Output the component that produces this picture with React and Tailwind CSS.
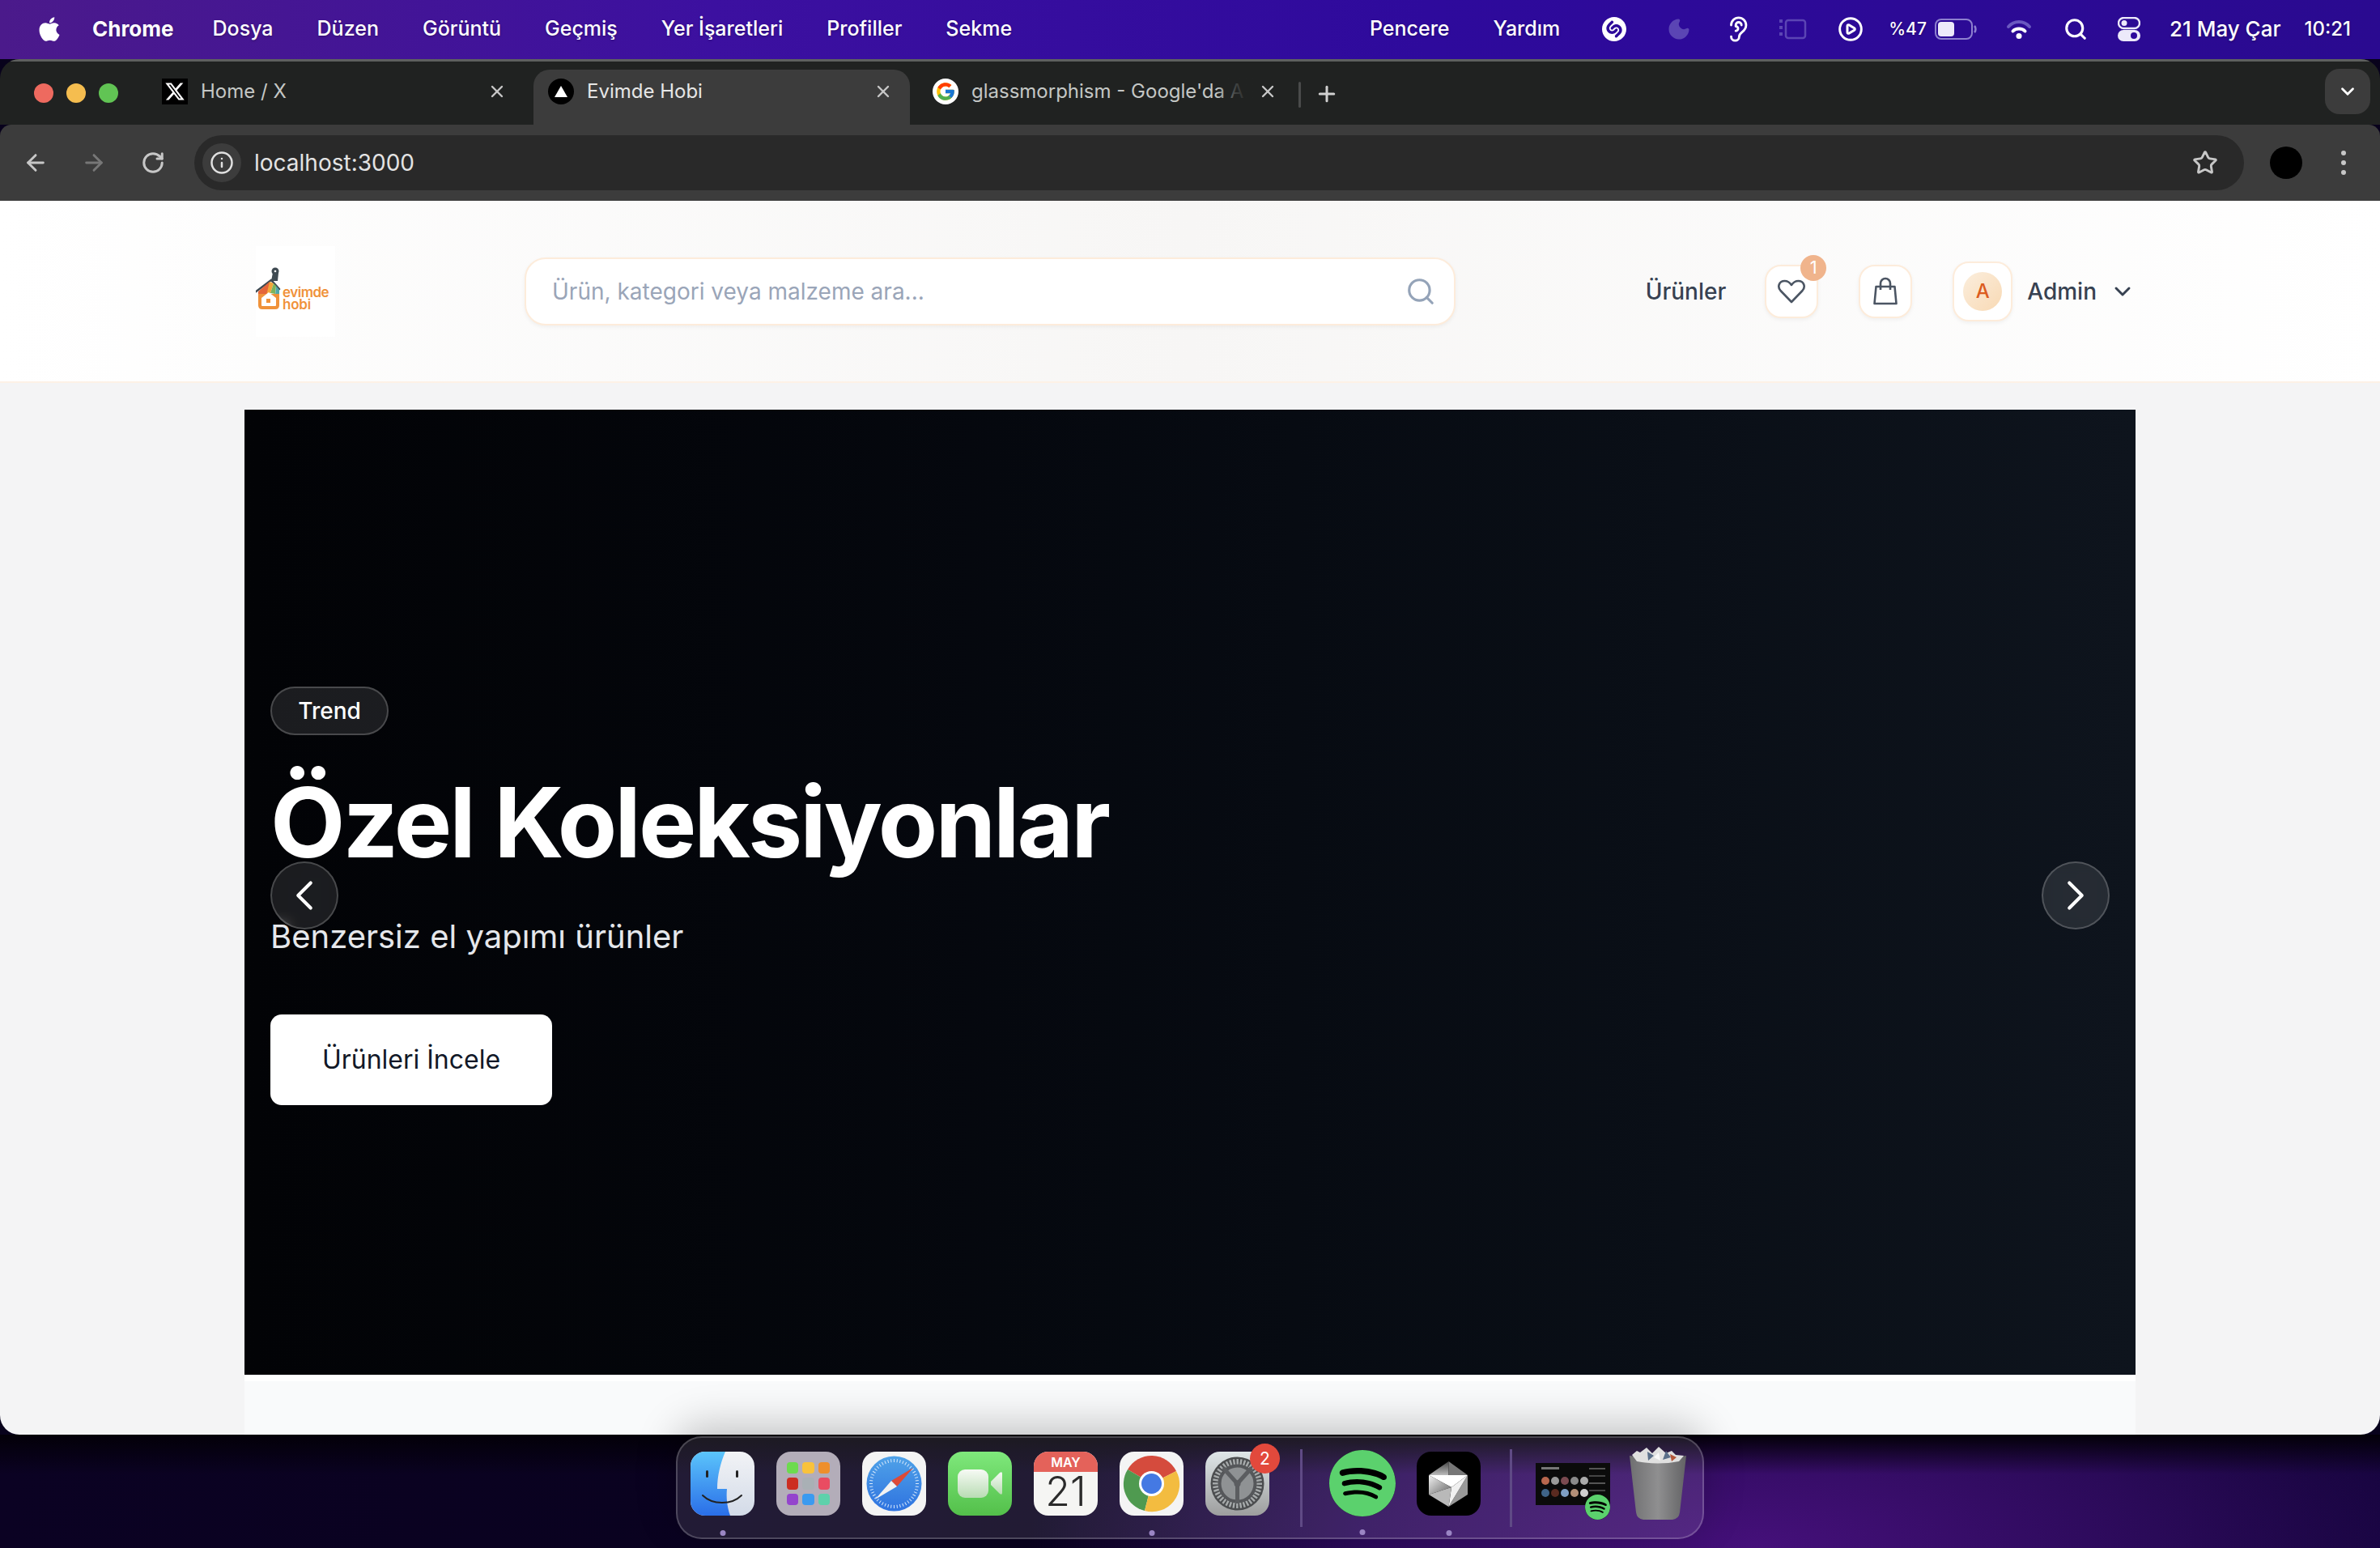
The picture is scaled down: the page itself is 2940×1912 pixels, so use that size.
import React from 'react';
import {
  ArrowLeft, ArrowRight, RotateCw, Info, X, Plus, Star, ChevronDown, ChevronLeft, ChevronRight,
  Search, Moon, Ear, CirclePlay,
} from 'lucide-react';
import { FaApple, FaXTwitter } from 'react-icons/fa6';
import { FcGoogle } from 'react-icons/fc';
import { SiShazam, SiSpotify } from 'react-icons/si';

const menuItems = ['Dosya', 'Düzen', 'Görüntü', 'Geçmiş', 'Yer İşaretleri', 'Profiller', 'Sekme'];

const MenuBar = () => (
  <div className="h-[73px] shrink-0 pb-[2px] flex items-center justify-between bg-[linear-gradient(90deg,#4b1a8b_0%,#3c10a0_30%,#2e0a9c_60%,#2a0a90_100%)] text-white text-[25px] font-medium [text-shadow:0_1px_3px_rgba(0,0,0,0.3)]">
    <div className="flex items-center">
      <FaApple className="ml-[44px] w-[34px] h-[34px]" />
      <span className="ml-[36px] text-[26px] font-bold">Chrome</span>
      <div className="ml-[48px] flex gap-[54px]">
        {menuItems.map((m) => <span key={m}>{m}</span>)}
      </div>
    </div>
    <div className="flex items-center mr-[36px]">
      <span>Pencere</span>
      <span className="ml-[54px]">Yardım</span>
      <SiShazam className="ml-[52px] w-[30px] h-[30px]" />
      <Moon className="ml-[50px] w-[30px] h-[30px] text-[#5b45b4] fill-[#5b45b4]" />
      <Ear className="ml-[41px] w-[34px] h-[34px]" strokeWidth={2} />
      <svg className="ml-[32px]" width="36" height="26" viewBox="0 0 36 26" fill="none" stroke="#5b45b4" strokeWidth="2.5">
        <rect x="10" y="2" width="24" height="22" rx="3" />
        <path d="M2 3h4M2 11h4M2 19h4" strokeWidth="4" />
      </svg>
      <CirclePlay className="ml-[38px] w-[32px] h-[32px]" strokeWidth={2.2} />
      <span className="ml-[31px] text-[21px]">%47</span>
      <svg className="ml-[10px]" width="52" height="26" viewBox="0 0 52 26" fill="none">
        <rect x="1" y="1" width="45" height="24" rx="7" stroke="#8d80cf" strokeWidth="2" />
        <rect x="4" y="4" width="20" height="18" rx="4" fill="#ece9fa" />
        <path d="M49 9c2 2 2 6 0 8" stroke="#8d80cf" strokeWidth="2.5" />
      </svg>
      <svg className="ml-[36px]" width="32" height="26" viewBox="0 0 32 26" fill="none" strokeLinecap="round">
        <path d="M3 10C10 2 22 2 29 10" stroke="#6a58c0" strokeWidth="4" />
        <path d="M8.5 15.5C12 11.5 20 11.5 23.5 15.5" stroke="#fff" strokeWidth="4" />
        <circle cx="16" cy="21.5" r="3.5" fill="#fff" />
      </svg>
      <Search className="ml-[39px] w-[30px] h-[30px]" strokeWidth={2.5} />
      <svg className="ml-[37px]" width="28" height="30" viewBox="0 0 28 30" fill="none">
        <rect x="1" y="1" width="26" height="13" rx="6.5" stroke="#ece9fa" strokeWidth="2.4" />
        <circle cx="8" cy="7.5" r="3.5" fill="#ece9fa" />
        <rect x="0" y="16" width="28" height="14" rx="7" fill="#ece9fa" />
        <circle cx="20" cy="23" r="4" fill="#2e0a9c" />
      </svg>
      <span className="ml-[36px] text-[26px]">21 May Çar</span>
      <span className="ml-[29px] text-[24px]">10:21</span>
    </div>
  </div>
);

const Tab = ({ icon, title, active, fade, titleGap = 'ml-[16px]', className }) => (
  <div className={`h-[68px] w-[465px] shrink-0 flex items-center text-[24px] rounded-t-[20px] pb-[14px] ${active ? 'bg-[#3c3c3c] text-[#e6e6e6]' : 'text-[#c4c7c5]'} ${className}`}>
    <div className="ml-[18px] w-[32px] h-[32px] flex items-center justify-center shrink-0">{icon}</div>
    <span className={`${titleGap} w-[348px] whitespace-nowrap relative`}>
      {title}
      {fade && <span className="absolute left-[304px] top-0 h-full w-[44px] bg-linear-to-r from-transparent via-[#202221]/80 to-[#202221]" />}
    </span>
    <X className="w-[24px] h-[24px] text-[#c7c7c7] ml-[6px]" strokeWidth={2.4} />
  </div>
);

const BrowserChrome = () => (
  <>
    <div className="h-[81px] shrink-0 flex items-end bg-[#202221] border-t-[3px] border-[#5e605f] relative">
      <div className="absolute left-[42px] top-[27px] flex gap-[16px]">
        <div className="w-[24px] h-[24px] rounded-full bg-[#ee6a5f]" />
        <div className="w-[24px] h-[24px] rounded-full bg-[#f5bd4f]" />
        <div className="w-[24px] h-[24px] rounded-full bg-[#61c454]" />
      </div>
      <div className="flex ml-[182px]">
        <Tab
          title="Home / X"
          icon={<span className="w-[32px] h-[32px] bg-black flex items-center justify-center"><FaXTwitter className="w-[26px] h-[26px] text-white" /></span>}
        />
        <Tab
          active
          title="Evimde Hobi"
          className="ml-[12px]"
          icon={
            <span className="w-[32px] h-[32px] rounded-full bg-black flex items-center justify-center">
              <svg width="18" height="16" viewBox="0 0 18 16"><path d="M9 1l8 14H1z" fill="#fff" /></svg>
            </span>
          }
        />
        <Tab
          fade
          title="glassmorphism - Google'da A"
          titleGap="ml-[16px]"
          className="ml-[10px]"
          icon={<span className="w-[32px] h-[32px] rounded-full bg-white flex items-center justify-center"><FcGoogle className="w-[26px] h-[26px]" /></span>}
        />
      </div>
      <div className="absolute left-[1604px] top-[25px] w-[3px] h-[32px] bg-[#4a4b4b] rounded-full" />
      <Plus className="absolute left-[1624px] top-[25px] w-[30px] h-[30px] text-[#d0d0d0]" strokeWidth={2.4} />
      <div className="absolute right-[12px] top-[9px] w-[56px] h-[56px] rounded-[18px] bg-[#3c3c3c] flex items-center justify-center">
        <ChevronDown className="w-[26px] h-[26px] text-white" strokeWidth={2.6} />
      </div>
    </div>
    <div className="h-[94px] shrink-0 flex items-center bg-[#3c3c3c] rounded-t-[14px] pl-[28px] pr-[42px]">
      <ArrowLeft className="w-[32px] h-[32px] text-[#c7c7c7]" strokeWidth={2.2} />
      <ArrowRight className="ml-[40px] w-[32px] h-[32px] text-[#777]" strokeWidth={2.2} />
      <RotateCw className="ml-[42px] w-[30px] h-[30px] text-[#c7c7c7]" strokeWidth={2.4} />
      <div className="ml-[36px] flex-1 h-[68px] rounded-full bg-[#292929] flex items-center pl-[10px] pr-[32px]">
        <div className="w-[48px] h-[48px] rounded-full bg-[#3c3c3c] flex items-center justify-center">
          <Info className="w-[30px] h-[30px] text-[#e0e0e0]" strokeWidth={2} />
        </div>
        <span className="ml-[16px] text-[28px] text-[#e3e3e3]">localhost:3000</span>
        <Star className="ml-auto w-[32px] h-[32px] text-[#c7c7c7]" strokeWidth={2.2} />
      </div>
      <div className="ml-[32px] w-[40px] h-[40px] rounded-full bg-black" />
      <div className="ml-[48px] flex flex-col gap-[6px]">
        <span className="w-[6px] h-[6px] rounded-full bg-[#c7c7c7]" />
        <span className="w-[6px] h-[6px] rounded-full bg-[#c7c7c7]" />
        <span className="w-[6px] h-[6px] rounded-full bg-[#c7c7c7]" />
      </div>
    </div>
  </>
);

const Logo = () => (
  <div className="w-[98px] h-[112px] bg-white flex items-center justify-center shrink-0">
    <svg width="98" height="112" viewBox="316 304 98 112">
      <circle cx="340" cy="335" r="4.5" fill="#3f4a52" />
      <circle cx="340" cy="335" r="1.3" fill="#fff" />
      <path d="M337 337l-2 10h8l1-10z" fill="#3f4a52" />
      <path d="M315 361l20-15 10 11" fill="none" stroke="#3f4a52" strokeWidth="2.5" strokeLinecap="round" />
      <path d="M319 360l14-12 3 4-6 13h-11z" fill="#e4653a" />
      <path d="M333 348l5 2-5 15h-4z" fill="#f3a63b" />
      <path d="M338 350l3 3-1 10-6-1z" fill="#7cb45c" />
      <path d="M341 353l4 5v7h-5z" fill="#4fa8a8" />
      <path d="M319 363v14q0 5 5 5h16q5 0 5-5v-14" fill="#f0923a" />
      <path d="M323 368l9-7 9 7v9q0 1-1 1h-16q-1 0-1-1z" fill="#fff" />
      <rect x="329" y="369" width="5" height="5" fill="#f0923a" />
      <text x="349" y="367" fontSize="17" fontWeight="600" fill="#f0923a" fontFamily="Inter, sans-serif" letterSpacing="-0.5">evimde</text>
      <text x="349" y="382" fontSize="17" fontWeight="600" fill="#f0923a" fontFamily="Inter, sans-serif" letterSpacing="-0.2">hobi</text>
    </svg>
  </div>
);

const IconButton = ({ children }) => (
  <div className="relative w-[66px] h-[66px] rounded-[20px] bg-white border-2 border-[#fdecdb] shadow-[0_2px_5px_rgba(0,0,0,0.05)] flex items-center justify-center text-[#4b5563]">
    {children}
  </div>
);

const SiteHeader = () => (
  <div className="h-[225px] shrink-0 border-b-2 border-[#fdf1e6] bg-[linear-gradient(90deg,#ffffff_0%,#f7f6f5_50%,#ffffff_100%)] pl-[316px] pr-[302px] flex items-center">
    <Logo />
    <div className="ml-[234px] w-[1150px] h-[84px] rounded-[26px] bg-white border-2 border-[#fdecdb] shadow-[0_2px_5px_rgba(0,0,0,0.05)] flex items-center pl-[32px] pr-[22px]">
      <span className="text-[28px] text-[#9aa5b8]">Ürün, kategori veya malzeme ara...</span>
      <Search className="ml-auto mt-[1px] w-[38px] h-[38px] text-[#94a3b8]" strokeWidth={2} />
    </div>
    <span className="ml-auto text-[28px] font-medium text-[#374151]">Ürünler</span>
    <div className="ml-[48px]">
      <IconButton>
        <svg width="36" height="31" viewBox="0 0 36 31" fill="none" stroke="currentColor" strokeWidth="2.6" strokeLinejoin="round">
          <path d="M18 29L4.5 15C0 10 3 3 9.5 3 13 3 16 5 18 8 20 5 23 3 26.500 3 33 3 36 10 31.500 15Z" />
        </svg>
        <span className="absolute -top-[14px] -right-[12px] w-[32px] h-[32px] rounded-full bg-[#f0b48c] text-white text-[22px] flex items-center justify-center">1</span>
      </IconButton>
    </div>
    <div className="ml-[50px]">
      <IconButton>
        <svg width="30" height="35" viewBox="0 0 30 35" fill="none" stroke="currentColor" strokeWidth="2.6" strokeLinejoin="round">
          <path d="M3.500 12H26.500L28.500 33H1.500Z" />
          <path d="M9 16V8a6 6 0 0 1 12 0V16" />
        </svg>
      </IconButton>
    </div>
    <div className="ml-[50px] w-[74px] h-[74px] rounded-[20px] bg-white border-2 border-[#fdecdb] flex items-center justify-center shadow-[0_2px_5px_rgba(0,0,0,0.05)]">
      <div className="w-[48px] h-[48px] rounded-full bg-linear-to-br from-[#fbeedd] to-[#f8d9b4] text-[#dc5c1f] text-[24px] font-medium flex items-center justify-center">A</div>
    </div>
    <span className="ml-[18px] text-[28px] font-medium text-[#374151]">Admin</span>
    <ChevronDown className="ml-[16px] w-[32px] h-[32px] text-[#374151]" strokeWidth={2.2} />
  </div>
);

const Hero = () => (
  <div className="relative h-[1192px] shrink-0 bg-linear-to-r from-[#020306] to-[#0e141d] flex flex-col justify-center items-start pl-[32px] pt-[9px]">
    <div className="h-[60px] w-[146px] rounded-full bg-white/10 border-2 border-white/20 flex items-center justify-center text-white text-[28px] font-medium">Trend</div>
    <h1 className="mt-[33px] text-[120px] leading-[150px] font-bold tracking-[-0.025em] text-white whitespace-nowrap">Özel Koleksiyonlar</h1>
    <p className="mt-[37px] text-[40px] leading-[58px] text-[#e5e7eb]">Benzersiz el yapımı ürünler</p>
    <div className="mt-[67px] w-[348px] h-[112px] rounded-[14px] bg-white text-[#111827] text-[32px] flex items-center justify-center">Ürünleri İncele</div>
    <div className="absolute left-[32px] top-[558px] w-[84px] h-[84px] rounded-full bg-white/10 border-2 border-white/20 backdrop-blur-sm flex items-center justify-center">
      <ChevronLeft className="w-[62px] h-[62px] text-white" strokeWidth={1.6} />
    </div>
    <div className="absolute right-[32px] top-[558px] w-[84px] h-[84px] rounded-full bg-white/10 border-2 border-white/20 backdrop-blur-sm flex items-center justify-center">
      <ChevronRight className="w-[62px] h-[62px] text-white" strokeWidth={1.6} />
    </div>
  </div>
);

const Page = () => (
  <div className="flex-1 min-h-0 flex flex-col bg-[#f4f4f5] overflow-hidden">
    <SiteHeader />
    <div className="flex-1 min-h-0 mt-[33px] mx-[302px] flex flex-col bg-white">
      <Hero />
      <div className="mt-[8px] flex-1 bg-[#f9fafb]" />
    </div>
  </div>
);

const Finder = () => (
  <svg width="79" height="79" viewBox="0 0 79 79">
    <defs>
      <linearGradient id="fb" x1="0" y1="0" x2="0" y2="1"><stop offset="0" stopColor="#5bc4fb" /><stop offset="1" stopColor="#2a6ee8" /></linearGradient>
      <linearGradient id="fw" x1="0" y1="0" x2="0" y2="1"><stop offset="0" stopColor="#f2f3f6" /><stop offset="1" stopColor="#d3dbe8" /></linearGradient>
      <clipPath id="fc"><rect width="79" height="79" rx="18" /></clipPath>
    </defs>
    <g clipPath="url(#fc)">
      <rect width="79" height="79" fill="url(#fw)" />
      <path d="M0 0h43c-6 14-10 30-10 46h12c-1 10 0 22 4 33H0z" fill="url(#fb)" />
    </g>
    <rect x="19" y="23" width="3" height="9" rx="1.5" fill="#222" />
    <rect x="56" y="23" width="3" height="9" rx="1.5" fill="#222" />
    <path d="M15 54c12 12 36 12 48 0" fill="none" stroke="#222" strokeWidth="2" strokeLinecap="round" />
  </svg>
);

const launchColors = ['#6ddb4f', '#f9c23c', '#ee8f2c', '#cc2d22', '#a9b0b5', '#e94c62', '#9444cd', '#3b9af0', '#5ed1ab'];

const Launchpad = () => (
  <div className="w-[79px] h-[79px] rounded-[18px] bg-[#b3adb9] grid grid-cols-3 gap-x-[5px] gap-y-[5px] px-[13px] py-[13px]">
    {launchColors.map((c) => <div key={c} className="rounded-[4px]" style={{ backgroundColor: c }} />)}
  </div>
);

const Safari = () => {
  const ticks = Array.from({ length: 48 }, (_, i) => i * 7.5);
  return (
    <svg width="79" height="79" viewBox="0 0 79 79">
      <defs><linearGradient id="sb" x1="0" y1="0" x2="0" y2="1"><stop offset="0" stopColor="#4fa2e8" /><stop offset="1" stopColor="#2f73e0" /></linearGradient></defs>
      <rect width="79" height="79" rx="18" fill="#f4f4f4" />
      <circle cx="39.5" cy="39.5" r="34" fill="url(#sb)" />
      {ticks.map((a) => <rect key={a} x="39" y="9" width="1" height="4" fill="#d7e8fb" transform={`rotate(${a} 39.5 39.5)`} />)}
      <path d="M63 20L36 36l7 7z" fill="#dd4a38" />
      <path d="M16 59l20-23 7 7z" fill="#f2f2f2" />
    </svg>
  );
};

const FaceTime = () => (
  <svg width="79" height="79" viewBox="0 0 79 79">
    <defs>
      <linearGradient id="ft" x1="0" y1="0" x2="0" y2="1"><stop offset="0" stopColor="#7fe87c" /><stop offset="1" stopColor="#53c04a" /></linearGradient>
      <linearGradient id="fc2" x1="0" y1="0" x2="0" y2="1"><stop offset="0" stopColor="#f6faf4" /><stop offset="1" stopColor="#b9dcb4" /></linearGradient>
    </defs>
    <rect width="79" height="79" rx="18" fill="url(#ft)" />
    <rect x="12" y="22" width="38" height="35" rx="9" fill="url(#fc2)" />
    <path d="M53 37l11-11q3-2 3 1v24q0 3-3 1l-11-11z" fill="url(#fc2)" />
  </svg>
);

const CalendarIcon = () => (
  <div className="w-[79px] h-[79px] rounded-[18px] overflow-hidden bg-[#f5f5f3] flex flex-col items-center">
    <div className="w-full h-[25px] bg-[#e4625a] text-white text-[16px] font-semibold flex items-center justify-center">MAY</div>
    <div className="text-[50px] leading-[48px] font-light text-[#2b2b2b]">21</div>
  </div>
);

const ChromeIcon = () => (
  <svg width="79" height="79" viewBox="0 0 79 79">
    <rect width="79" height="79" rx="18" fill="#f4f4f4" />
    <path d="M39.5 39.5L10 22A34 34 0 0 1 70 24z" fill="#d54b3d" />
    <path d="M39.5 39.5L10 22A34 34 0 0 0 31 73z" fill="#4f9a50" />
    <path d="M39.5 39.5L70 24A34 34 0 0 1 31 73z" fill="#f3bc40" />
    <circle cx="39.5" cy="39.5" r="15.5" fill="#fff" />
    <circle cx="39.5" cy="39.5" r="12.5" fill="#4479e3" />
  </svg>
);

const SettingsIcon = () => {
  const teeth = Array.from({ length: 40 }, (_, i) => i * 9);
  return (
    <div className="relative">
      <svg width="79" height="79" viewBox="0 0 79 79">
        <defs><linearGradient id="gr" x1="0" y1="0" x2="0" y2="1"><stop offset="0" stopColor="#dfe6e8" /><stop offset="1" stopColor="#9d9e9e" /></linearGradient></defs>
        <rect width="79" height="79" rx="18" fill="url(#gr)" />
        <circle cx="39.5" cy="39.5" r="33" fill="#4b4d4f" />
        {teeth.map((a) => <rect key={a} x="38.5" y="9" width="2.4" height="7" fill="#a6aaab" transform={`rotate(${a} 39.5 39.5)`} />)}
        <circle cx="39.5" cy="39.5" r="22" fill="#8f9294" stroke="#55575a" strokeWidth="4" />
        <path d="M39.5 39.5L22 20M39.5 39.5L57 20M39.5 39.5V64" stroke="#5b5d60" strokeWidth="5" />
        <circle cx="39.5" cy="39.5" r="4" fill="#5b5d60" />
      </svg>
      <span className="absolute -top-[10px] -right-[13px] w-[37px] h-[37px] rounded-full bg-[#e2493c] text-white text-[21px] flex items-center justify-center">2</span>
    </div>
  );
};

const SpotifyIcon = () => (
  <div className="w-[82px] h-[82px] -my-[2px] rounded-full bg-black flex items-center justify-center">
    <SiSpotify className="w-[82px] h-[82px] text-[#5bd16d]" />
  </div>
);

const CrystalIcon = () => (
  <svg width="79" height="79" viewBox="0 0 79 79">
    <defs>
      <linearGradient id="cr" x1="0" y1="0" x2="0" y2="1"><stop offset="0" stopColor="#444" /><stop offset="1" stopColor="#bbb" /></linearGradient>
      <linearGradient id="cl" x1="0" y1="0" x2="1" y2="1"><stop offset="0" stopColor="#f2f2f2" /><stop offset="1" stopColor="#666" /></linearGradient>
    </defs>
    <rect width="79" height="79" rx="18" fill="#000" />
    <path d="M39.500 12L15 29h24.500z" fill="url(#cr)" />
    <path d="M39.500 12L63 29H39.500z" fill="#777" />
    <path d="M15 29H63L43 44z" fill="#fff" />
    <path d="M15 29v24l28-9z" fill="url(#cl)" />
    <path d="M63 29v24L39.500 68z" fill="#999" />
    <path d="M63 29L39.500 68 43 44z" fill="#f0f0f0" />
    <path d="M15 53l24.500 15L43 44z" fill="#b9b9b9" />
  </svg>
);

const thumbColors = ['#b8674e', '#9a9a9a', '#7a4a50', '#8a8a8a', '#aaaaaa', '#3f6488', '#5a2a20', '#7f9fc4', '#b49078', '#d0d0d0'];

const WindowThumb = () => (
  <div className="relative w-[92px] h-[52px] mt-[14px] bg-[#0b0b0b] shrink-0">
    <div className="absolute left-[7px] top-[5px] w-[22px] h-[3px] bg-[#777]" />
    <div className="absolute left-[7px] top-[17px] w-[58px] grid grid-cols-5 gap-x-[2px] gap-y-[5px]">
      {thumbColors.map((c, i) => <div key={i} className="w-[10px] h-[10px] rounded-full" style={{ backgroundColor: c }} />)}
    </div>
    <div className="absolute left-[66px] top-[6px] w-[20px] h-[36px] flex flex-col gap-[7px]">
      <div className="h-[2px] bg-[#555]" /><div className="h-[2px] bg-[#444]" /><div className="h-[2px] bg-[#555]" /><div className="h-[2px] bg-[#444]" />
    </div>
    <div className="absolute right-0 -bottom-[18px] w-[31px] h-[31px] rounded-full bg-black">
      <SiSpotify className="w-[31px] h-[31px] text-[#5bd16d]" />
    </div>
  </div>
);

const Trash = () => (
  <svg width="70" height="92" viewBox="0 0 70 92" className="-mt-[7px]">
    <defs>
      <linearGradient id="tr" x1="0" y1="0" x2="1" y2="0"><stop offset="0" stopColor="#6f6f71" /><stop offset="0.5" stopColor="#8f8f90" /><stop offset="1" stopColor="#636365" /></linearGradient>
    </defs>
    <path d="M0 12q35 6 70 0l-8 70q-1 8-9 9H17q-8-1-9-9z" fill="url(#tr)" />
    <path d="M3 11l6-5 4 2 8-6 7 7 8-8 9 8 7-3 5 5 10 1-6 7q-26 5-52 0z" fill="#e0e0e0" />
    <path d="M22 7l8 5-7 6zM45 6l6 8-10 3z" fill="#5a6f8a" />
    <path d="M50 10l8 4-6 5z" fill="#b5583a" />
    <path d="M30 14l6-6 2 10z" fill="#f8f8f8" />
  </svg>
);

const Dot = () => <span className="absolute -bottom-[25px] left-1/2 -translate-x-1/2 w-[7px] h-[7px] rounded-full bg-[#9b86c4]" />;
const DockDivider = () => <div className="w-[3px] h-[96px] mt-[-3px] bg-[#5f4a85] shrink-0" />;

const Dock = () => (
  <div className="relative z-10 flex-1 flex items-start justify-center pt-[2px] bg-[linear-gradient(180deg,#030008_0%,transparent_35%),radial-gradient(ellipse_900px_340px_at_2170px_140px,#45107a_0%,#2a0a58_55%,transparent_100%),linear-gradient(90deg,#0b0223_0%,#08021c_60%,#13033a_100%)]">
    <div className="w-[1270px] h-[127px] rounded-[32px] border-2 border-white/20 bg-white/10 shadow-[0_-14px_50px_rgba(0,0,0,0.22)] flex items-start pt-[17px] pl-[16px]">
      <div className="relative"><Finder /><Dot /></div>
      <div className="ml-[27px]"><Launchpad /></div>
      <div className="ml-[27px]"><Safari /></div>
      <div className="ml-[27px]"><FaceTime /></div>
      <div className="ml-[27px]"><CalendarIcon /></div>
      <div className="ml-[27px] relative"><ChromeIcon /><Dot /></div>
      <div className="ml-[27px]"><SettingsIcon /></div>
      <div className="ml-[38px]"><DockDivider /></div>
      <div className="ml-[33px] relative"><SpotifyIcon /><Dot /></div>
      <div className="ml-[26px] relative"><CrystalIcon /><Dot /></div>
      <div className="ml-[36px]"><DockDivider /></div>
      <div className="ml-[29px]"><WindowThumb /></div>
      <div className="ml-[24px]"><Trash /></div>
    </div>
  </div>
);

export default function App() {
  return (
    <div className="w-[2940px] h-[1912px] overflow-hidden flex flex-col bg-[#08021c] font-[family-name:Inter,sans-serif]">
      <MenuBar />
      <div className="h-[1699px] shrink-0 flex flex-col rounded-[24px] overflow-hidden">
        <BrowserChrome />
        <Page />
      </div>
      <Dock />
    </div>
  );
}
